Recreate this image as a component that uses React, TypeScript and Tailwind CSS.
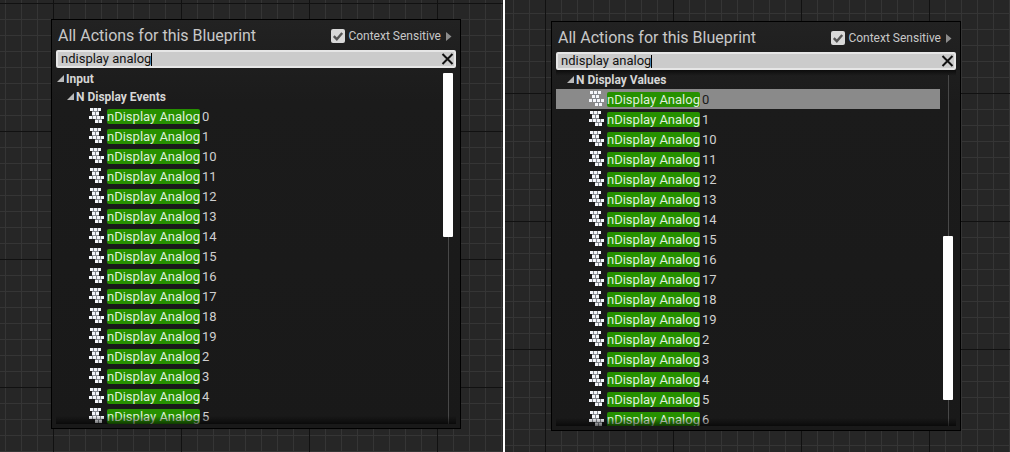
import { useState } from "react";
import clsx from "clsx";

const VALUES = ["0", "1", "10", "11", "12", "13", "14", "15", "16", "17", "18", "19", "2", "3", "4", "5", "6"];

const BRICKS: [number, number][] = [
  [1, 0], [5, 0], [9, 0],
  [3, 4], [7, 4],
  [0, 8], [4, 8], [8, 8], [12, 8],
  [6, 12], [10, 12],
];

function BricksIcon() {
  return (
    <svg width="15" height="17" viewBox="0 0 15 17" className="shrink-0" aria-hidden="true">
      <path d="M1 0h11v3h-2v5h5v3h-2v4H6v-4H0V8h3V3H1z" fill="#85898f" />
      {BRICKS.map(([x, y]) => (
        <rect key={`${x}-${y}`} x={x} y={y} width="3" height="3" fill="#f4f6fa" />
      ))}
    </svg>
  );
}

function Category({ label, nested }: { label: string; nested?: boolean }) {
  return (
    <div className={clsx("flex h-[18px] items-center gap-0.5 text-xs font-bold text-[#d6d6d6]", nested ? "pl-[11px]" : "pl-px")}>
      <svg width="7" height="9" viewBox="0 0 7 9" className="shrink-0" aria-hidden="true">
        <path d="M7 0v7H0z" fill="#b9b9b9" />
      </svg>
      {label}
    </div>
  );
}

function Action({ value, selected }: { value: string; selected?: boolean }) {
  return (
    <li className={clsx("flex h-5 items-center pt-px pl-[33px] text-[13px] leading-[15px]", selected ? "bg-[#8a8a8a] text-[#1a1a1a]" : "text-[#cfcfcf]")}>
      <BricksIcon />
      <span className="ml-[3px] rounded-xs bg-[#269000] text-[#dfeedb]">nDisplay Analog</span>
      <span className="ml-0.5">{value}</span>
    </li>
  );
}

type MenuProps = {
  id: string;
  category: string;
  root?: string;
  count: number;
  selected?: number;
  scrolled?: boolean;
  className: string;
};

function ActionMenu({ id, category, root, count, selected, scrolled, className }: MenuProps) {
  const [query, setQuery] = useState("ndisplay analog");
  const [sensitive, setSensitive] = useState(true);
  return (
    <section className={clsx("flex min-h-0 flex-1 flex-col border border-black bg-linear-to-b from-[#222222] via-[#1b1b1b] via-20% to-[#191919] px-1 pb-1", className)}>
      <header className="flex h-[30px] shrink-0 items-center justify-between pt-0.5 pl-0.5">
        <h2 className="text-base text-[#c8c8c8]">All Actions for this Blueprint</h2>
        <div className="flex items-center pr-1">
          <label htmlFor={`${id}-context`} className="flex items-center gap-[3px] text-xs text-[#c8c8c8]">
            <span className="grid size-3.5">
              <input
                id={`${id}-context`}
                type="checkbox"
                checked={sensitive}
                onChange={(e) => setSensitive(e.target.checked)}
                className="peer col-start-1 row-start-1 size-3.5 appearance-none rounded-xs bg-[#d9d9d9]"
              />
              <svg viewBox="0 0 14 14" className="pointer-events-none invisible col-start-1 row-start-1 size-3.5 peer-checked:visible" aria-hidden="true">
                <path d="M2.8 7.2l3 3 5.4-6.2" fill="none" stroke="#555" strokeWidth="2.4" />
              </svg>
            </span>
            Context Sensitive
          </label>
          <button type="button" aria-label="Context options" className="ml-[5px]">
            <svg width="6" height="9" viewBox="0 0 6 9" aria-hidden="true">
              <path d="M0 0l5.5 4.5L0 9z" fill="#8c8c8c" />
            </svg>
          </button>
        </div>
      </header>

      <div className="flex h-[18px] shrink-0 items-center rounded-xs border-2 border-[#e6e6e6] bg-[#cbcbcb] pl-[3px] text-[13px] text-[#111]">
        <input
          type="text"
          aria-label="Search actions"
          value={query}
          onChange={(e) => setQuery(e.target.value)}
          className="field-sizing-content h-3.5 bg-transparent leading-[14px] outline-none"
        />
        <span className="h-[13px] w-px bg-black" />
        <button type="button" aria-label="Clear search" onClick={() => setQuery("")} className="ml-auto">
          <svg width="13" height="12" viewBox="0 0 13 12" aria-hidden="true">
            <path d="M1.5 1l10 10M11.5 1l-10 10" stroke="#111" strokeWidth="2" />
          </svg>
        </button>
      </div>

      <div className="relative flex min-h-0 flex-1 overflow-hidden">
        <div className={clsx("min-w-0 flex-1", scrolled ? "pt-px" : "pt-0.5")}>
          {root && <Category label={root} />}
          <Category label={category} nested />
          <ul>
            {VALUES.slice(0, count).map((value, i) => (
              <Action key={value} value={value} selected={i === selected} />
            ))}
          </ul>
        </div>
        <div className="grid w-4 shrink-0 pt-[5px]">
          <div className="col-start-1 row-start-1 ml-2 w-px bg-[#484848]" />
          <div className={clsx("z-10 col-start-1 row-start-1 ml-[3px] h-[164px] w-2.5 rounded-[1px] bg-white", scrolled && "mb-[26px] self-end")} />
        </div>
        {scrolled && <div className="absolute inset-x-0 top-0 h-1.5 bg-linear-to-b from-black/60 to-transparent" />}
        <div className="absolute inset-x-0 bottom-0 h-2 bg-linear-to-t from-black/60 to-transparent" />
      </div>
    </section>
  );
}

const GRAPH =
  "flex min-h-0 min-w-0 flex-col bg-[#262626] bg-[linear-gradient(to_right,#111_1px,transparent_1px),linear-gradient(to_bottom,#111_1px,transparent_1px),linear-gradient(to_right,#353535_1px,transparent_1px),linear-gradient(to_bottom,#353535_1px,transparent_1px)] bg-size-[128px_128px,128px_128px,16px_16px,16px_16px]";

export default function App() {
  return (
    <main className="grid h-screen grid-cols-[503fr_2px_505fr] grid-rows-1 bg-white font-[Roboto,sans-serif]">
      <div className={clsx(GRAPH, "bg-position-[53px_3px]")}>
        <ActionMenu id="events" root="Input" category="N Display Events" count={16} className="mt-[19px] mr-[42px] mb-[23px] ml-[51px]" />
      </div>
      <div />
      <div className={clsx(GRAPH, "bg-position-[40px_93px]")}>
        <ActionMenu id="values" category="N Display Values" count={17} selected={0} scrolled className="mt-[21px] mr-[49px] mb-[21px] ml-[46px]" />
      </div>
    </main>
  );
}
